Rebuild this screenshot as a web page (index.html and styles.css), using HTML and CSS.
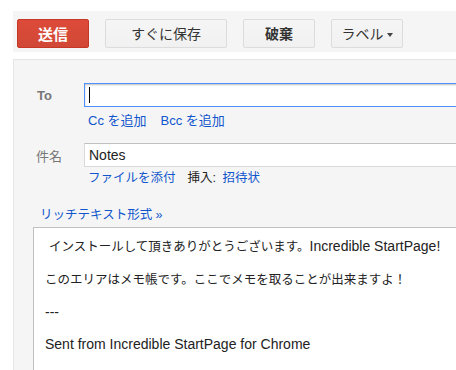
FILE: index.html
```html
<!DOCTYPE html>
<html lang="ja">
<head>
    <meta charset="UTF-8">
    <title>メモ</title>
    <link rel="stylesheet" href="styles.css">
</head>
<body>
    <div class="page">
        <div class="toolbar">
            <button class="btn btn-send">送信</button>
            <button class="btn btn-save">すぐに保存</button>
            <button class="btn btn-discard">破棄</button>
            <button class="btn btn-label">ラベル<span class="caret"></span></button>
        </div>

        <div class="compose">
            <div class="field-row to-row">
                <label class="field-label label-to">To</label>
                <div class="field-input input-focus"><span class="cursor"></span></div>
            </div>
            <div class="link-row cc-row">
                <a class="link" href="#">Cc を追加</a>
                <a class="link" href="#">Bcc を追加</a>
            </div>

            <div class="field-row subject-row">
                <label class="field-label">件名</label>
                <div class="field-input">Notes</div>
            </div>
            <div class="link-row attach-row">
                <a class="link" href="#">ファイルを添付</a>
                <span class="insert">挿入: <a class="link invite" href="#">招待状</a></span>
            </div>

            <div class="rich-row">
                <a class="link" href="#">リッチテキスト形式 »</a>
            </div>

            <div class="editor">
                <p>&nbsp;<span class="ja">インストールして頂きありがとうございます。</span>Incredible StartPage!</p>
                <p><span class="ja">このエリアはメモ帳です。ここでメモを取ることが出来ますよ！</span></p>
                <p>---</p>
                <p>Sent from Incredible StartPage for Chrome</p>
            </div>
        </div>
    </div>
</body>
</html>
```

FILE: styles.css
```css
body {
    margin: 0;
    background: #fff;
    font-family: "Liberation Sans", Arial, "Noto Sans CJK JP", sans-serif;
    font-size: 13px;
    color: #222;
    overflow: hidden;
}

.page {
    padding: 11px 0 0 13px;
    width: 500px;
}

/* toolbar */
.toolbar {
    display: flex;
    gap: 16px;
    height: 41px;
    padding: 8px 0 0 4px;
    box-sizing: border-box;
    background: #f5f5f5;
}

.btn {
    height: 29px;
    width: 72px;
    padding: 0;
    border: 1px solid #dcdcdc;
    border-radius: 2px;
    background: linear-gradient(to bottom, #f5f5f5, #f1f1f1);
    color: #333;
    font-family: "Noto Sans CJK JP", sans-serif;
    font-size: 14px;
    line-height: 27px;
    cursor: pointer;
}

.btn-send {
    border-color: #c53727;
    background: linear-gradient(to bottom, #dd4b39, #d14836);
    color: #fff;
    font-size: 15px;
    font-weight: bold;
}

.btn-save {
    width: 122px;
}

.btn-discard {
    font-weight: bold;
}

.caret {
    display: inline-block;
    margin-left: 3px;
    vertical-align: middle;
    border-left: 3px solid transparent;
    border-right: 3px solid transparent;
    border-top: 4px solid #444;
}

/* compose panel */
.compose {
    margin-top: 7px;
    height: 320px;
    padding: 23px 0 0 22px;
    border-top: 1px solid #e5e5e5;
    border-left: 1px solid #e5e5e5;
    background: #f5f5f5;
}

.field-row {
    display: flex;
    align-items: center;
}

.field-label {
    width: 48px;
    color: #777;
    font-family: "Noto Sans CJK JP", sans-serif;
    font-size: 13px;
}

.label-to {
    font-family: "Liberation Sans", Arial, sans-serif;
    font-weight: bold;
    padding-left: 1px;
    width: 47px;
}

.field-input {
    flex: 1;
    height: 24px;
    box-sizing: border-box;
    padding: 0 4px;
    border: 1px solid #d9d9d9;
    border-top-color: #c0c0c0;
    background: #fff;
    font-size: 14px;
    line-height: 22px;
    color: #222;
}

.input-focus {
    border-color: #4d90fe;
    box-shadow: inset 0 1px 2px rgba(0, 0, 0, 0.25);
}

.cursor {
    display: inline-block;
    width: 1px;
    height: 16px;
    margin-top: 3px;
    vertical-align: top;
    background: #000;
}

.link-row {
    display: flex;
    gap: 14px;
    padding-left: 52px;
    line-height: 16px;
}

.cc-row {
    margin-top: 6px;
}

.subject-row {
    margin-top: 14px;
}

.attach-row {
    margin-top: 3px;
    gap: 12px;
    font-size: 12.5px;
}

.link {
    color: #15c;
    text-decoration: none;
}

.insert {
    color: #222;
}

.invite {
    margin-left: 3px;
}

.rich-row {
    margin-top: 21px;
    padding-left: 4px;
    line-height: 16px;
    font-size: 12.5px;
}

/* editor */
.editor {
    margin: 4px 0 0 -3px;
    padding: 10px 0 0 11px;
    height: 200px;
    border: 1px solid #c0c0c0;
    border-right: none;
    background: #fff;
    font-size: 14px;
}

.editor p {
    margin: 0 0 16px;
    line-height: 16px;
    white-space: nowrap;
}

.editor .ja {
    font-size: 12.5px;
}
```
